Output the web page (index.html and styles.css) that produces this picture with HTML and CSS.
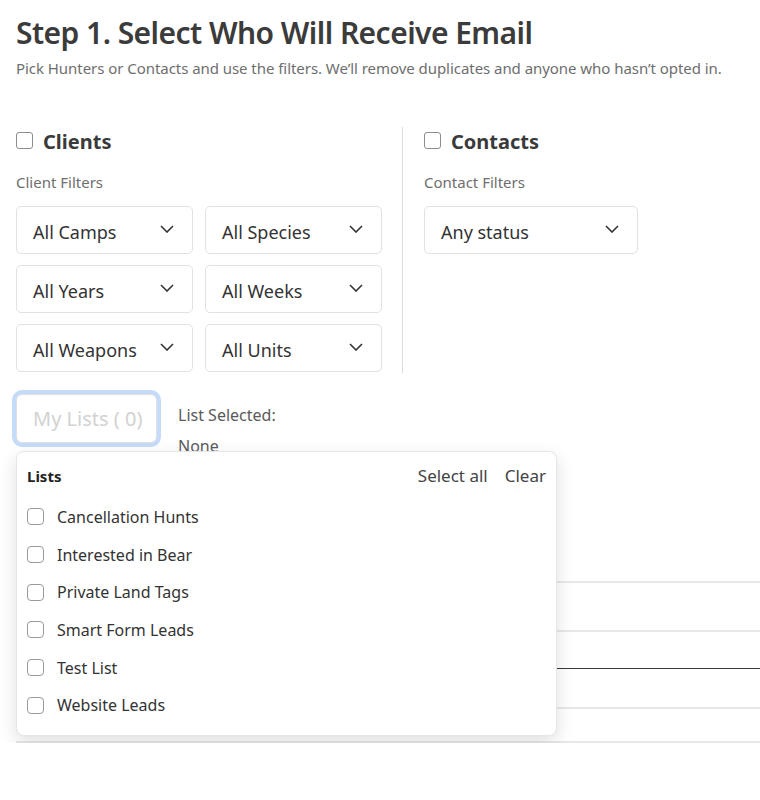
FILE: index.html
```html
<!DOCTYPE html>
<html lang="en">
<head>
<meta charset="utf-8">
<title>Step 1</title>
<link rel="stylesheet" href="styles.css">
</head>
<body>
<main class="page">
  <h1 class="title">Step 1. Select Who Will Receive Email</h1>
  <p class="subtitle">Pick Hunters or Contacts and use the filters. We’ll remove duplicates and anyone who hasn’t opted in.</p>

  <div class="cols">
    <section class="col col-clients">
      <div class="col-head"><span class="check"></span><span class="col-title">Clients</span></div>
      <div class="filter-label">Client Filters</div>
      <div class="select-grid">
        <div class="select"><span>All Camps</span><svg class="chev" viewBox="0 0 14 8"><path d="M1 1l6 6 6-6"/></svg></div>
        <div class="select"><span>All Species</span><svg class="chev" viewBox="0 0 14 8"><path d="M1 1l6 6 6-6"/></svg></div>
        <div class="select"><span>All Years</span><svg class="chev" viewBox="0 0 14 8"><path d="M1 1l6 6 6-6"/></svg></div>
        <div class="select"><span>All Weeks</span><svg class="chev" viewBox="0 0 14 8"><path d="M1 1l6 6 6-6"/></svg></div>
        <div class="select"><span>All Weapons</span><svg class="chev" viewBox="0 0 14 8"><path d="M1 1l6 6 6-6"/></svg></div>
        <div class="select"><span>All Units</span><svg class="chev" viewBox="0 0 14 8"><path d="M1 1l6 6 6-6"/></svg></div>
      </div>
    </section>
    <section class="col col-contacts">
      <div class="col-head"><span class="check"></span><span class="col-title">Contacts</span></div>
      <div class="filter-label">Contact Filters</div>
      <div class="select select-wide"><span>Any status</span><svg class="chev" viewBox="0 0 14 8"><path d="M1 1l6 6 6-6"/></svg></div>
    </section>
  </div>

  <div class="lists-row">
    <button class="lists-btn" type="button">My Lists ( 0)</button>
    <div class="selected">
      <div>List Selected:</div>
      <div>None</div>
    </div>

    <div class="dropdown">
      <div class="dd-head">
        <span class="dd-title">Lists</span>
        <span class="dd-actions"><span>Select all</span><span>Clear</span></span>
      </div>
      <ul class="dd-list">
        <li><span class="check sm"></span>Cancellation Hunts</li>
        <li><span class="check sm"></span>Interested in Bear</li>
        <li><span class="check sm"></span>Private Land Tags</li>
        <li><span class="check sm"></span>Smart Form Leads</li>
        <li><span class="check sm"></span>Test List</li>
        <li><span class="check sm"></span>Website Leads</li>
      </ul>
    </div>
  </div>

  <div class="table">
    <div class="trow r1"></div>
    <div class="trow r2"></div>
    <div class="trow r3"></div>
    <div class="trow r4"></div>
  </div>
</main>
</body>
</html>
```

FILE: styles.css
```css
* { box-sizing: border-box; }
html, body { margin: 0; padding: 0; background: #fff; }
body {
  font-family: "Noto Sans", "Open Sans", sans-serif;
  color: #333;
  overflow: hidden;
}
.page { padding: 14px 16px 0 16px; }

.title {
  margin: 0;
  font-size: 30px;
  line-height: 38px;
  font-weight: 600;
  letter-spacing: -0.55px;
  color: #3b3b3b;
}
.subtitle {
  margin: 5px 0 0 0;
  font-size: 15px;
  line-height: 22px;
  letter-spacing: -0.05px;
  color: #6e6e6e;
}

.cols {
  display: flex;
  margin-top: 48px;
}
.col-clients {
  width: 387px;
  padding-right: 22px;
  border-right: 1px solid #dcdcdc;
  padding-bottom: 1px;
}
.col-contacts { padding-left: 21px; }

.col-head {
  display: flex;
  align-items: center;
  gap: 10px;
  margin-top: 1px;
  height: 28px;
}
.col-title {
  font-size: 20px;
  line-height: 28px;
  font-weight: 700;
  color: #3a3a3a;
}
.check {
  width: 17px;
  height: 17px;
  border: 1.5px solid #8d8d8d;
  border-radius: 3px;
  background: #fff;
  flex: none;
  margin-top: -3px;
}
.filter-label {
  margin-top: 15px;
  font-size: 15px;
  line-height: 22px;
  color: #6e6e6e;
}

.select-grid {
  margin-top: 13px;
  display: grid;
  grid-template-columns: 177px 177px;
  column-gap: 12px;
  row-gap: 11px;
}
.select {
  height: 48px;
  border: 1px solid #e2e2e2;
  border-radius: 5px;
  display: flex;
  align-items: center;
  justify-content: space-between;
  padding: 3px 18px 0 16px;
  font-size: 18px;
  line-height: 24px;
  color: #333;
}
.select-wide { width: 214px; margin-top: 13px; }
.chev {
  width: 14px;
  height: 8px;
  margin-top: -6px;
  fill: none;
  stroke: #333;
  stroke-width: 1.6;
}

.lists-row {
  position: relative;
  display: flex;
  align-items: flex-start;
  gap: 21px;
  margin-top: 21px;
}
.lists-btn {
  width: 141px;
  height: 49px;
  border: 1px solid #e0e0e0;
  border-radius: 6px;
  background: #fff;
  box-shadow: 0 0 0 4px #c5dbfa;
  font-family: inherit;
  font-size: 20px;
  color: #d2d2d2;
  text-align: left;
  padding: 0 0 0 16px;
}
.selected {
  margin-top: 10px;
  font-size: 16px;
  line-height: 22px;
  color: #5a5a5a;
  display: flex;
  flex-direction: column;
  gap: 9px;
}

.dropdown {
  position: absolute;
  top: 57px;
  left: 0;
  width: 541px;
  height: 285px;
  background: #fff;
  border: 1px solid #e6e6e6;
  border-radius: 8px;
  box-shadow: 0 6px 18px rgba(0,0,0,0.13);
  padding: 12px 10px 0 10px;
  z-index: 2;
}
.dd-head {
  display: flex;
  justify-content: space-between;
  align-items: center;
  height: 24px;
}
.dd-title {
  font-size: 15px;
  font-weight: 700;
  color: #222;
}
.dd-actions {
  display: flex;
  gap: 17px;
  font-size: 17px;
  line-height: 24px;
  color: #444;
}
.dd-list {
  list-style: none;
  margin: 10px 0 0 0;
  padding: 0;
}
.dd-list li {
  height: 37.7px;
  display: flex;
  align-items: center;
  gap: 13px;
  font-size: 16px;
  color: #333;
}
.check.sm {
  width: 17px;
  height: 17px;
  border: 1.2px solid #9a9a9a;
  border-radius: 4px;
  margin-top: 0;
}

.table {
  margin-top: 124px;
  margin-right: -16px;
}
.trow { border-top: 2px solid #e8e8e8; }
.r1 { height: 49px; }
.r2 { height: 38px; border-top: 2px solid #e8e8e8; }
.r3 { height: 39px; border-top: 1.5px solid #3a3a3a; }
.r4 { height: 36px; border-top: 2px solid #e8e8e8; border-bottom: 2px solid #e8e8e8; }
```
